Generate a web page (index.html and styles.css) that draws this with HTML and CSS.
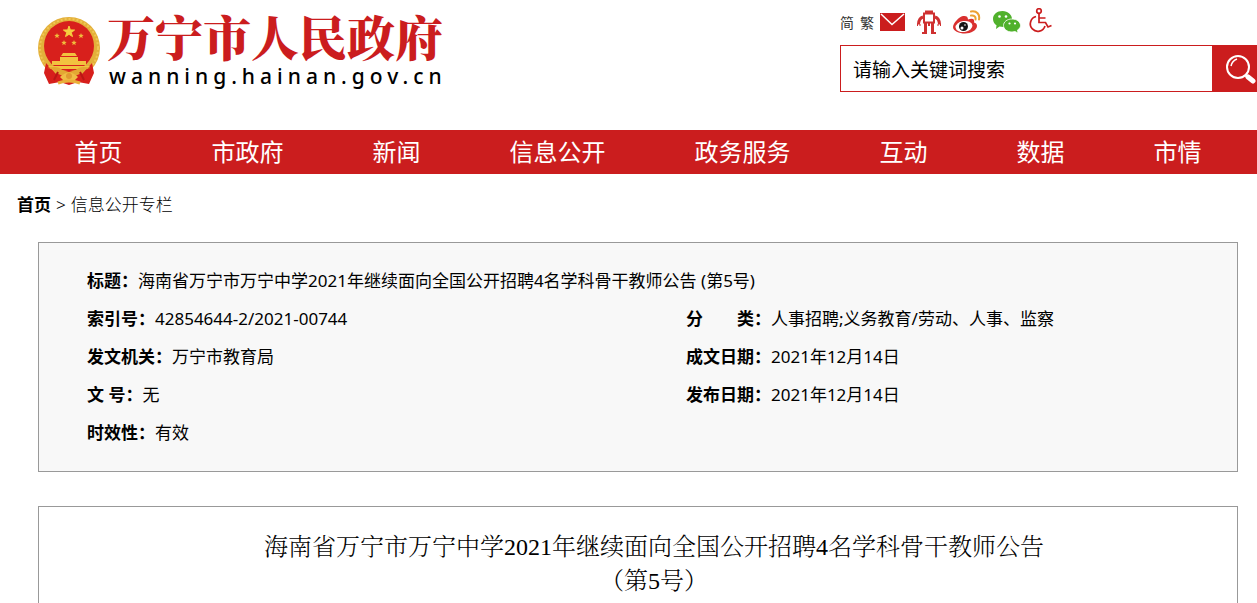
FILE: index.html
```
<!DOCTYPE html>
<html lang="zh-Hans">
<head>
    <meta charset="UTF-8">
    <meta name="viewport" content="width=device-width, initial-scale=1.0">
    <title>万宁市人民政府</title>
    <link rel="stylesheet" href="styles.css">
</head>
<body>
    <header class="header">
        <a class="logo" href="#">
            <svg class="emblem" viewBox="0 0 64 70" aria-hidden="true">
                <circle cx="32" cy="32" r="31" fill="#e3b03a"/>
                <circle cx="32" cy="32" r="29" fill="none" stroke="#f0c654" stroke-width="2" stroke-dasharray="2 2"/>
                <path d="M9 47l10 11 13-4 13 4 10-11 2 10-5 11-11-2-9 3-9-3-11 2-5-11z" fill="#d71f1c"/>
                <circle cx="32" cy="30" r="25" fill="#d8201c"/>
                <path d="M32 10l1.400 3.900 4.200.1-3.300 2.600 1.200 4-3.500-2.300-3.500 2.300 1.200-4-3.300-2.600 4.200-.1z" fill="#f6cd3f" stroke="#f6cd3f"/>
                <g fill="#f0bd3c">
                    <path id="s" d="M20 17l.7 1.800 2 .1-1.500 1.300.5 2-1.700-1.100-1.700 1.100.5-2-1.500-1.300 2-.1z"/>
                    <use href="#s" x="24"/>
                    <use href="#s" x="7" y="7"/>
                    <use href="#s" x="17" y="7"/>
                </g>
                <path d="M24 40l2-3h12l2 3zM23 41h18v5H23zM15 45h34v4H15zM11 50h42l-3 3H14z" fill="#f2c23f"/>
                <path d="M10 52q11-3 15 2l7 2 7-2q4-5 15-2-5 0-9 5l-7 3H26l-7-3q-4-5-9-5z" fill="#e3a833"/>
                <path d="M17 64l4-8M47 64l-4-8" fill="none" stroke="#b91715" stroke-width="2"/>
                <path d="M23 61q9-9 18 0l-3 3H26z" fill="#efbd45"/>
                <circle cx="32" cy="60" r="3" fill="#e09a30"/>
                <path d="M21 67q11-4 22 0" fill="none" stroke="#e9b03a" stroke-width="3"/>
            </svg>
            <span class="logo-text">
                <span class="logo-name">万宁市人民政府</span>
                <span class="logo-domain">wanning.hainan.gov.cn</span>
            </span>
        </a>
        <div class="tools">
            <div class="links">
                <a href="#">简</a>
                <a href="#">繁</a>
                <a href="#" aria-label="邮箱">
                    <svg width="25" height="18" viewBox="0 0 25 18">
                        <path d="M0 0h25v18H0z" fill="#cb1d1e"/>
                        <path d="M1 1l11 10.500L24 1" fill="none" stroke="#fff" stroke-width="1.500"/>
                    </svg>
                </a>
                <a class="robot" href="#" aria-label="机器人">
                    <svg width="24" height="24" viewBox="0 0 24 24" fill="none" stroke="#cf3030" stroke-width="2">
                        <path d="M8 2h8" stroke-width="3"/>
                        <path d="M7 3.500h10v9H7z"/>
                        <path d="M6 7Q2 8 1.500 14M18 7q4 1 4.500 7" stroke-width="3"/>
                        <path d="M.5 16v-2h2.500v2M21 16v-2h2.500v2" stroke-width="1"/>
                        <path d="M8.500 13v10M15.500 13v10" stroke-width="3"/>
                        <path d="M12 12v4M5 23h5M14 23h5"/>
                    </svg>
                </a>
                <a class="weibo" href="#" aria-label="微博">
                    <svg width="28" height="24" viewBox="0 0 28 24">
                        <path d="M10 6C6 7 0 13 0 17c0 4 6 6.500 12 6.500S24 20 24 16c0-2-1-3-3-3.500 1-3-1-5-6-3 0-3-2-4-5-3.500z" fill="#d9302f"/>
                        <ellipse cx="11" cy="16.500" rx="8.500" ry="5.500" fill="#fff" transform="rotate(-8 11 16.500)"/>
                        <circle cx="10.500" cy="16.500" r="4.500" fill="#151515"/>
                        <circle cx="9" cy="18" r="1.500" fill="#fff"/>
                        <circle cx="12" cy="15" r=".8" fill="#fff"/>
                        <path d="M18 1.500c6-1 9 3 8 8M18 5.500c3-.5 5 1 4.500 4" fill="none" stroke="#eda032" stroke-width="2" stroke-linecap="round"/>
                    </svg>
                </a>
                <a class="wechat" href="#" aria-label="微信">
                    <svg width="28" height="22" viewBox="0 0 28 22">
                        <path d="M9.500 0C4 0 0 3.500 0 8c0 3 1.500 5 3.500 6.200L3 18l3.500-2.500 4 .5C16 16 19 12 19 8S15 0 9.500 0z" fill="#50b12c"/>
                        <path d="M19 8c-5 0-8.500 3-8.500 6.500S14 21 19 21l3-.5 3 1.500-.5-3c2-1.200 3-2.500 3-4.500 0-3.500-3.500-6.500-8.500-6.500z" fill="#50b12c" stroke="#fff" stroke-width=".8"/>
                        <g fill="#fff">
                            <circle cx="6.500" cy="5.500" r="1.300"/>
                            <circle cx="13" cy="5.500" r="1.300"/>
                            <circle cx="16.500" cy="12.500" r="1.100"/>
                            <circle cx="22" cy="12.500" r="1.100"/>
                        </g>
                    </svg>
                </a>
                <a href="#" aria-label="无障碍">
                    <svg width="25" height="28" viewBox="0 0 25 28" fill="none" stroke="#cb1d1e" stroke-width="1.700">
                        <circle cx="12" cy="3" r="2.300"/>
                        <path d="M12 5.500v9h6.500l2.500 4.500 3.500-1.500M12 10h6.500"/>
                        <path d="M9 8.500A7.500 7.500 0 1 0 18 18"/>
                    </svg>
                </a>
            </div>
            <form class="search">
                <input type="text" placeholder="请输入关键词搜索" aria-label="请输入关键词搜索">
                <button type="button" aria-label="搜索">
                    <svg width="30" height="30" viewBox="0 0 30 30" fill="none" stroke="#fff">
                        <circle cx="12" cy="13" r="11" stroke-width="2"/>
                        <path d="M5 12q1-5 6-7" stroke-width="1.500"/>
                        <path d="M19 21l2 2" stroke-width="2"/>
                        <path d="M22 23l5 4" stroke-width="5" stroke-linecap="round"/>
                    </svg>
                </button>
            </form>
        </div>
    </header>

    <nav class="nav">
        <a href="#">首页</a>
        <a href="#">市政府</a>
        <a href="#">新闻</a>
        <a href="#">信息公开</a>
        <a href="#">政务服务</a>
        <a href="#">互动</a>
        <a href="#">数据</a>
        <a href="#">市情</a>
    </nav>

    <div class="crumbs">
        <a class="home" href="#">首页</a>
        <span>&gt;</span>
        <a href="#">信息公开专栏</a>
    </div>

    <dl class="info">
        <div class="wide"><dt>标题：</dt><dd>海南省万宁市万宁中学2021年继续面向全国公开招聘4名学科骨干教师公告 (第5号)</dd></div>
        <div><dt>索引号：</dt><dd>42854644-2/2021-00744</dd></div>
        <div><dt>分　　类：</dt><dd>人事招聘;义务教育/劳动、人事、监察</dd></div>
        <div><dt>发文机关：</dt><dd>万宁市教育局</dd></div>
        <div><dt>成文日期：</dt><dd>2021年12月14日</dd></div>
        <div><dt>文 号：</dt><dd>无</dd></div>
        <div><dt>发布日期：</dt><dd>2021年12月14日</dd></div>
        <div class="wide"><dt>时效性：</dt><dd>有效</dd></div>
    </dl>

    <main class="article">
        <h1>海南省万宁市万宁中学2021年继续面向全国公开招聘4名学科骨干教师公告<br>（第5号）</h1>
    </main>
</body>
</html>
```
FILE: styles.css
```
* {
    box-sizing: border-box;
}
body {
    margin: 0;
    min-height: 100vh;
    display: flex;
    flex-direction: column;
    background-color: #fff;
    color: #000;
    font-family: "Noto Sans", "Noto Sans CJK SC", sans-serif;
    font-size: 17px;
}
a {
    color: inherit;
    text-decoration: none;
}
svg {
    display: block;
}
.header {
    display: flex;
    justify-content: space-between;
    height: 130px;
    padding-left: 37px;
}
.logo {
    display: flex;
    align-items: flex-start;
    gap: 6px;
    padding-top: 16px;
}
.emblem {
    width: 64px;
    height: 70px;
}
.logo-text {
    display: flex;
    flex-direction: column;
    gap: 8px;
}
.logo-name {
    font-family: "Noto Serif CJK SC", "Noto Sans CJK SC", serif;
    font-size: 48px;
    font-weight: 900;
    line-height: 40px;
    color: #cb1d1e;
}
.logo-domain {
    font-size: 21px;
    font-weight: 500;
    line-height: 24px;
    letter-spacing: 5px;
    padding-left: 2px;
}
.tools {
    width: 417px;
}
.links {
    display: flex;
    align-items: center;
    gap: 6px;
    height: 45px;
    padding-bottom: 2px;
    font-size: 14px;
    color: #333;
}
.robot,
.weibo,
.wechat {
    margin-left: 6px;
}
.search {
    display: flex;
    height: 47px;
}
.search input {
    flex: 1;
    min-width: 0;
    padding: 3px 12px 0;
    border: 1px solid #cb1d1e;
    border-right: 0;
    border-radius: 0;
    background-color: #fff;
    font-family: inherit;
    font-size: 19px;
    outline: none;
}
.search input::placeholder {
    color: #000;
}
.search button {
    width: 45px;
    padding: 0 0 0 14px;
    border: 0;
    background-color: #cb1d1e;
    cursor: pointer;
}
.nav {
    display: flex;
    justify-content: space-around;
    padding: 0 11px 0 30px;
    background-color: #cb1d1e;
    color: #fff;
    font-size: 24px;
    line-height: 44px;
}
.crumbs {
    display: flex;
    gap: 5px;
    padding: 0 17px;
    font-weight: 300;
    line-height: 62px;
}
.crumbs .home {
    font-weight: bold;
}
.info {
    display: grid;
    grid-template-columns: 1fr 1fr;
    margin: 6px 19px 34px 38px;
    padding: 19px 0;
    border: 1px solid #999;
    background-color: #f8f8f8;
    line-height: 38px;
}
.info div {
    display: flex;
    padding-left: 48px;
}
.info .wide {
    grid-column: 1 / 3;
}
.info dt {
    font-weight: bold;
}
.info dd {
    margin: 0;
}
.article {
    flex: 1;
    margin: 0 19px 0 38px;
    padding: 23px 0 0 32px;
    border: 1px solid #999;
    border-bottom: 0;
}
.article h1 {
    margin: 0;
    font-family: "Liberation Serif", "Noto Serif CJK SC", "Noto Sans CJK SC", serif;
    font-size: 24px;
    font-weight: 300;
    line-height: 34px;
    text-align: center;
}
```
